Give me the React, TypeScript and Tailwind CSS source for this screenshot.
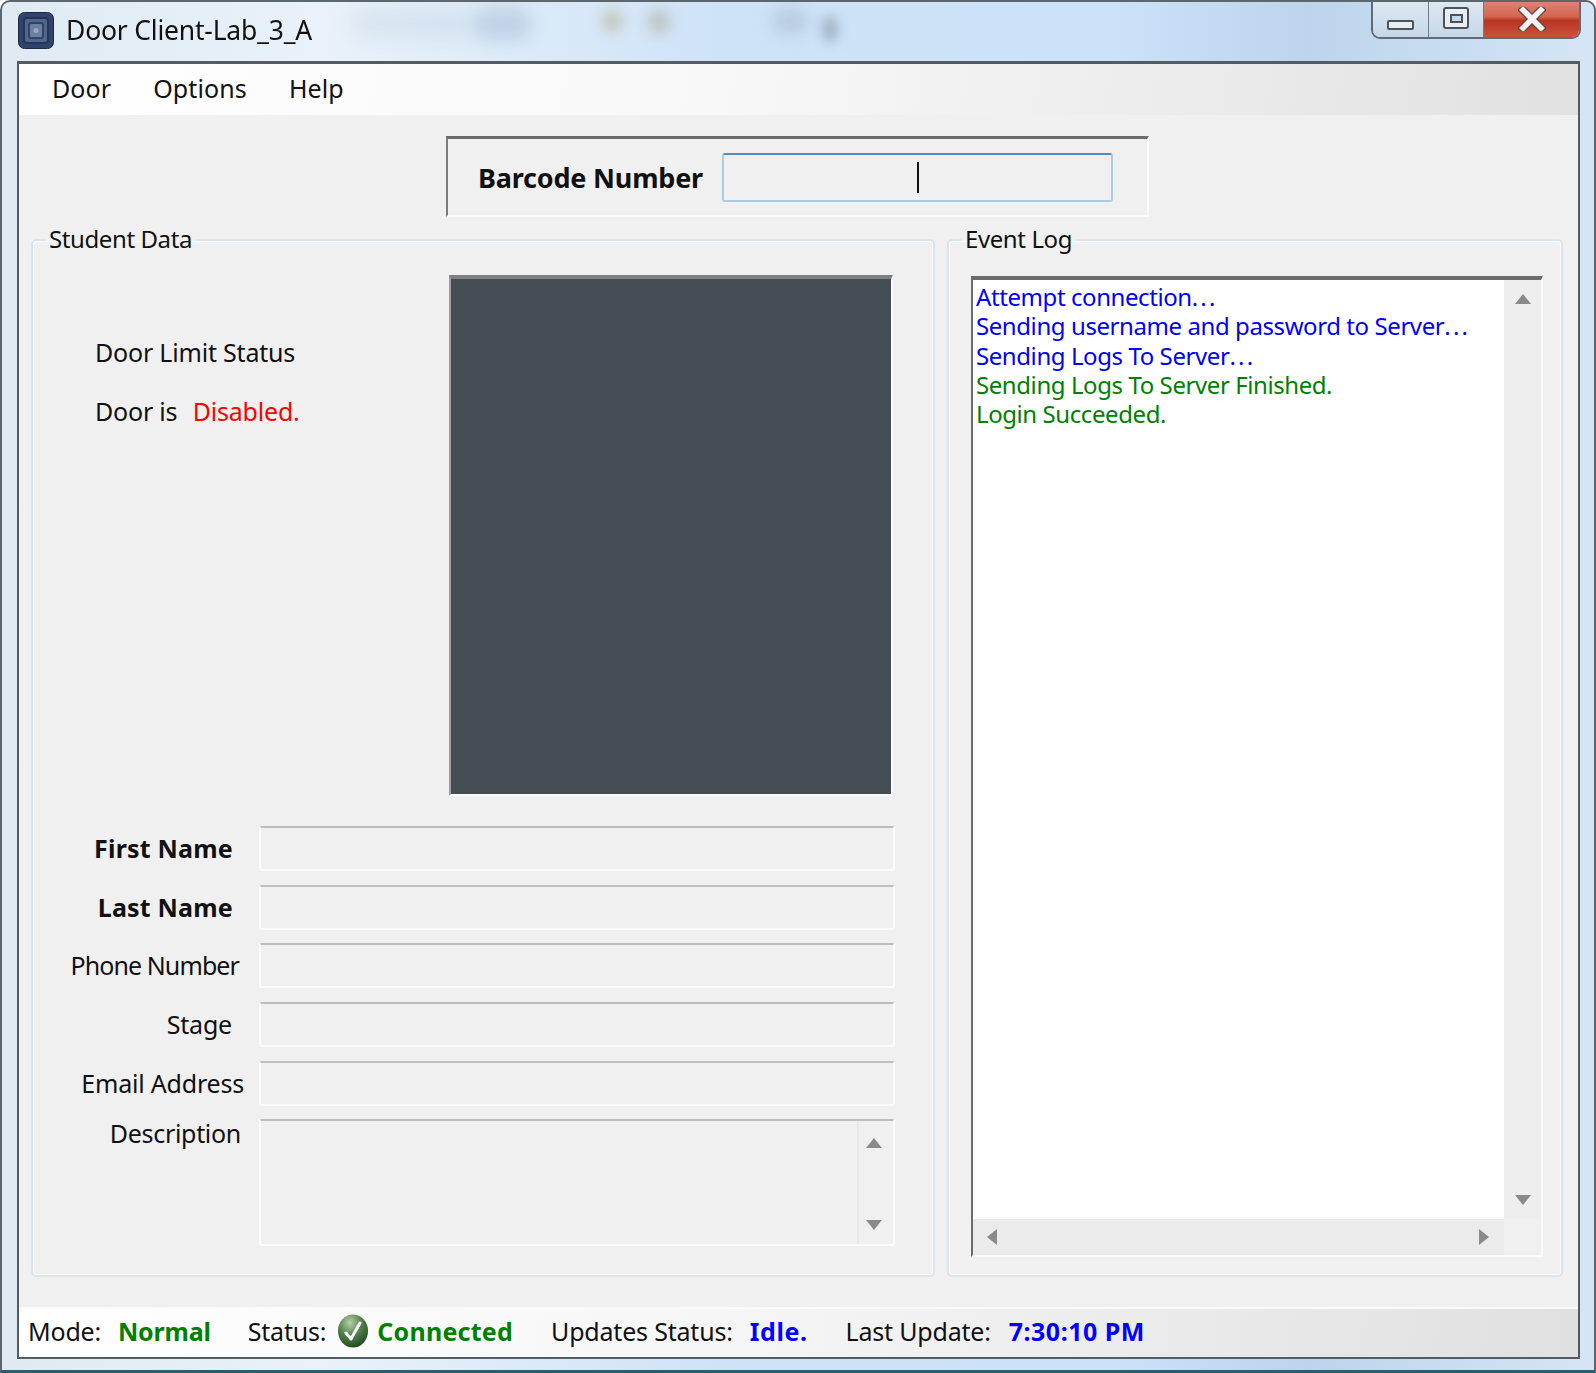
import React from 'react';

const Arrow = ({ dir }: { dir: 'up' | 'down' | 'left' | 'right' }) => {
  const points = {
    up: '0,10 8,0 16,10',
    down: '0,0 16,0 8,10',
    left: '10,0 10,16 0,8',
    right: '0,0 10,8 0,16',
  };
  const size = dir === 'up' || dir === 'down' ? { w: 16, h: 10 } : { w: 10, h: 16 };
  return (
    <svg width={size.w} height={size.h} viewBox={`0 0 ${size.w} ${size.h}`}>
      <polygon points={points[dir]} fill="#8a8a8a" />
    </svg>
  );
};

const WindowIcon = () => (
  <svg width="36" height="37" viewBox="0 0 36 37" className="shrink-0">
    <rect x="0.5" y="0.5" width="35" height="36" rx="6" fill="#2e4468" stroke="#1d2c46" />
    <rect x="6" y="6" width="24" height="25" rx="3" fill="#51678c" stroke="#23365a" strokeWidth="2" />
    <rect x="11" y="11" width="14" height="15" rx="2" fill="#6d7f9e" stroke="#2e4468" strokeWidth="2" />
    <circle cx="18" cy="18.5" r="2.5" fill="#9aa8bf" />
  </svg>
);

const CheckIcon = () => (
  <svg width="32" height="36" viewBox="0 0 32 36" className="shrink-0">
    <defs>
      <radialGradient id="ball" cx="40%" cy="25%" r="85%">
        <stop offset="0%" stopColor="#b8d0ac" />
        <stop offset="45%" stopColor="#55834c" />
        <stop offset="100%" stopColor="#1a3f1a" />
      </radialGradient>
    </defs>
    <ellipse cx="16" cy="18" rx="15" ry="16.5" fill="url(#ball)" />
    <path d="M9 20 L14 26 L23 10" fill="none" stroke="#ffffff" strokeWidth="3" strokeLinecap="round" strokeLinejoin="round" />
  </svg>
);

const FieldRow = ({ label, pr, bold, extra }: { label: string; pr: string; bold?: boolean; extra?: string }) => (
  <div className="flex h-[45px] items-center">
    <div className={`w-[226px] shrink-0 whitespace-nowrap text-right ${pr} ${bold ? 'font-bold tracking-[0.2px]' : ''} ${extra ?? ''}`}>{label}</div>
    <div className="h-full w-[636px] rounded-[3px] border-2 border-[#fbfbfb] border-t-[#bdbdbd] bg-[#f0f0f0]" />
  </div>
);

const logLines = [
  { text: 'Attempt connection', dots: true, color: 'text-[#0000ff]' },
  { text: 'Sending username and password to Server', dots: true, color: 'text-[#0000ff]' },
  { text: 'Sending Logs To Server', dots: true, color: 'text-[#0000ff]' },
  { text: 'Sending Logs To Server Finished.', dots: false, color: 'text-[#008000]' },
  { text: 'Login Succeeded.', dots: false, color: 'text-[#008000]' },
];

export default function App() {
  return (
    <div className="relative flex h-[1373px] w-[1596px] flex-col overflow-hidden rounded-t-[10px] border-2 border-b-[3px] border-[#5c666e] border-b-[#23616f] bg-[linear-gradient(90deg,#dfeaf3_0%,#e9f2fa_20%,#cfe3f7_45%,#cbe2f9_70%,#bcd5ec_82%,#d5e5f5_100%)] font-['Noto_Sans',sans-serif] text-[25px] leading-none tracking-[-0.2px] text-[#111] blur-[0.5px]">
      {/* Aero glass smudges behind the title */}
      <div className="absolute left-[350px] top-[8px] h-[26px] w-[120px] rounded-full bg-[#c3d3e2] opacity-40 blur-[10px]" />
      <div className="absolute left-[470px] top-[6px] h-[32px] w-[60px] rounded-full bg-[#a3b9d2] opacity-50 blur-[9px]" />
      <div className="absolute left-[600px] top-[8px] h-[22px] w-[20px] rounded-full bg-[#b4a777] opacity-50 blur-[7px]" />
      <div className="absolute left-[645px] top-[8px] h-[24px] w-[24px] rounded-full bg-[#a8a890] opacity-50 blur-[7px]" />
      <div className="absolute left-[770px] top-[6px] h-[26px] w-[36px] rounded-full bg-[#a4b6ca] opacity-50 blur-[8px]" />
      <div className="absolute left-[820px] top-[14px] h-[26px] w-[16px] rounded-full bg-[#7c8797] opacity-50 blur-[6px]" />

      {/* Title bar */}
      <div className="flex h-[59px] shrink-0 items-start pl-[16px] pt-[10px]">
        <WindowIcon />
        <div className="ml-[12px] mt-[5px] text-[26.5px]">Door Client-Lab_3_A</div>
        <div className="ml-auto mr-[13px] mt-[-12px] flex h-[39px] w-[210px] overflow-hidden rounded-b-[9px] border-2 border-t-0 border-[#5f6b76]">
          <div className="flex w-[56px] items-end justify-center border-r border-[#6f7c88] bg-[linear-gradient(#dfe9f3,#c7d7e7)] pb-[7px]">
            <div className="h-[10px] w-[27px] rounded-[2px] border-2 border-[#4a545e] bg-[#e9eef3]" />
          </div>
          <div className="flex w-[55px] items-start justify-center border-r border-[#6f7c88] bg-[linear-gradient(#dfe9f3,#c7d7e7)] pt-[7px]">
            <div className="flex h-[22px] w-[26px] items-center justify-center rounded-[3px] border-2 border-[#4a545e] bg-[#e9eef3]">
              <div className="h-[9px] w-[13px] border-2 border-[#4a545e] bg-[#c9d8e6]" />
            </div>
          </div>
          <div className="flex flex-1 items-start justify-center bg-[linear-gradient(#dc8878_0%,#d2654f_45%,#ba3521_55%,#c9533a_100%)] pt-[7px]">
            <svg width="28" height="24" viewBox="0 0 28 24">
              <path d="M5 3 L23 21 M23 3 L5 21" stroke="#6a4038" strokeWidth="8" strokeLinecap="square" />
              <path d="M5 3 L23 21 M23 3 L5 21" stroke="#f4f4f4" strokeWidth="5.5" strokeLinecap="square" />
            </svg>
          </div>
        </div>
      </div>

      {/* Client area */}
      <div className="ml-[15px] mr-[14px] flex h-[1298px] shrink-0 flex-col border-2 border-t-[3px] border-[#545c63] bg-[#f0f0f0]">
        {/* Menu */}
        <div className="flex h-[51px] shrink-0 items-center bg-[linear-gradient(100deg,#ffffff_0%,#f8f8f8_45%,#e1e1e1_100%)] pb-[2px] pl-[33px] tracking-[0.1px]">
          <span>Door</span>
          <span className="ml-[42px]">Options</span>
          <span className="ml-[42px]">Help</span>
        </div>

        {/* Barcode */}
        <div className="ml-[427px] mt-[21px] flex h-[81px] w-[703px] shrink-0 items-center border-2 border-t-[3px] border-[#fafafa] border-l-[#7c7c7c] border-t-[#6c6c6c] pl-[30px]">
          <span className="w-[224px] whitespace-nowrap text-[27px] font-bold tracking-[-0.2px]">Barcode Number</span>
          <div className="ml-[20px] flex h-[49px] w-[391px] items-center justify-center rounded-[3px] border-2 border-[#a9cbe6] border-t-[#4f8dc4]">
            <div className="h-[31px] w-[2px] bg-[#111]" />
          </div>
        </div>

        {/* Panels */}
        <div className="ml-[12px] mt-[8px] flex gap-[12px]">
          <fieldset className="h-[1052px] w-[904px] rounded-[5px] border-2 border-[#dbe6ec] shadow-[inset_0_0_0_1px_#fafafa]">
            <legend className="ml-[12px] h-[30px] px-[4px] pt-[1px] text-[24px] leading-[26px] tracking-[-0.4px]">Student Data</legend>
            <div className="flex h-[541px] pt-[20px]">
              <div className="w-[416px] shrink-0 pl-[62px] pt-[65px]">
                <div>Door Limit Status</div>
                <div className="mt-[34px] whitespace-nowrap">
                  Door is <span className="ml-[9px] text-[#ff0000]">Disabled.</span>
                </div>
              </div>
              <div className="h-[521px] w-[444px] border-2 border-t-[4px] border-[#fafafa] border-l-[#a0a0a0] border-t-[#808080] bg-[#434d52]" />
            </div>
            <div className="mt-[30px] flex flex-col gap-[13.7px]">
              <FieldRow label="First Name" pr="pr-[26px]" bold />
              <FieldRow label="Last Name" pr="pr-[26px]" bold />
              <FieldRow label="Phone Number" pr="pr-[20px]" extra="tracking-[-0.9px]" />
              <FieldRow label="Stage" pr="pr-[27px]" />
              <FieldRow label="Email Address" pr="pr-[15px]" />
              <div className="flex h-[127px]">
                <div className="w-[226px] shrink-0 pr-[18px] pt-[2px] text-right tracking-[-0.3px]">Description</div>
                <div className="flex h-full w-[636px] rounded-[3px] border-2 border-[#fbfbfb] border-t-[#bdbdbd]">
                  <div className="flex-1" />
                  <div className="flex w-[36px] flex-col items-center justify-between border-l-2 border-[#e8e8e8] pb-[14px] pr-[4px] pt-[17px]">
                    <Arrow dir="up" />
                    <Arrow dir="down" />
                  </div>
                </div>
              </div>
            </div>
          </fieldset>

          <fieldset className="h-[1052px] w-[616px] rounded-[5px] border-2 border-[#dbe6ec] shadow-[inset_0_0_0_1px_#fafafa]">
            <legend className="ml-[12px] h-[30px] px-[4px] pt-[1px] text-[24px] leading-[26px] tracking-[-0.4px]">Event Log</legend>
            <div className="ml-[22px] mt-[21px] flex h-[981px] w-[572px] flex-col border-2 border-t-[4px] border-[#fafafa] border-l-[#6c6c6c] border-t-[#6c6c6c]">
              <div className="flex min-h-0 flex-1">
                <div className="flex-1 bg-white pl-[3px] pt-[2px] text-[24px] tracking-[-0.42px]">
                  {logLines.map((line) => (
                    <div key={line.text} className={`h-[29.3px] whitespace-nowrap leading-[29px] ${line.color}`}>
                      {line.text}
                      {line.dots && <span className="tracking-[2.2px]">...</span>}
                    </div>
                  ))}
                </div>
                <div className="flex w-[37px] flex-col items-center justify-between bg-[#eeeeee] py-[14px]">
                  <Arrow dir="up" />
                  <Arrow dir="down" />
                </div>
              </div>
              <div className="flex h-[36px] shrink-0">
                <div className="flex flex-1 items-center justify-between bg-[#ebebeb] pl-[14px] pr-[15px]">
                  <Arrow dir="left" />
                  <Arrow dir="right" />
                </div>
                <div className="w-[37px] bg-[#f0f0f0]" />
              </div>
            </div>
          </fieldset>
        </div>

        {/* Status bar */}
        <div className="mt-auto flex h-[50px] shrink-0 items-center whitespace-nowrap border-t-2 border-[#fafafa] bg-[linear-gradient(100deg,#ffffff_0%,#f6f6f6_45%,#e0e0e0_100%)] pb-[4px] pl-[9px]">
          <span>Mode:</span>
          <span className="ml-[17px] font-bold text-[#008000]">Normal</span>
          <span className="ml-[37px]">Status:</span>
          <span className="ml-[11px]"><CheckIcon /></span>
          <span className="ml-[8px] font-bold tracking-[0.25px] text-[#008000]">Connected</span>
          <span className="ml-[38px]">Updates Status:</span>
          <span className="ml-[17px] font-bold tracking-[0.6px] text-[#0000ff]">Idle.</span>
          <span className="ml-[38px]">Last Update:</span>
          <span className="ml-[18px] font-bold tracking-[0.5px] text-[#0000ff]">7:30:10 PM</span>
        </div>
      </div>
    </div>
  );
}
